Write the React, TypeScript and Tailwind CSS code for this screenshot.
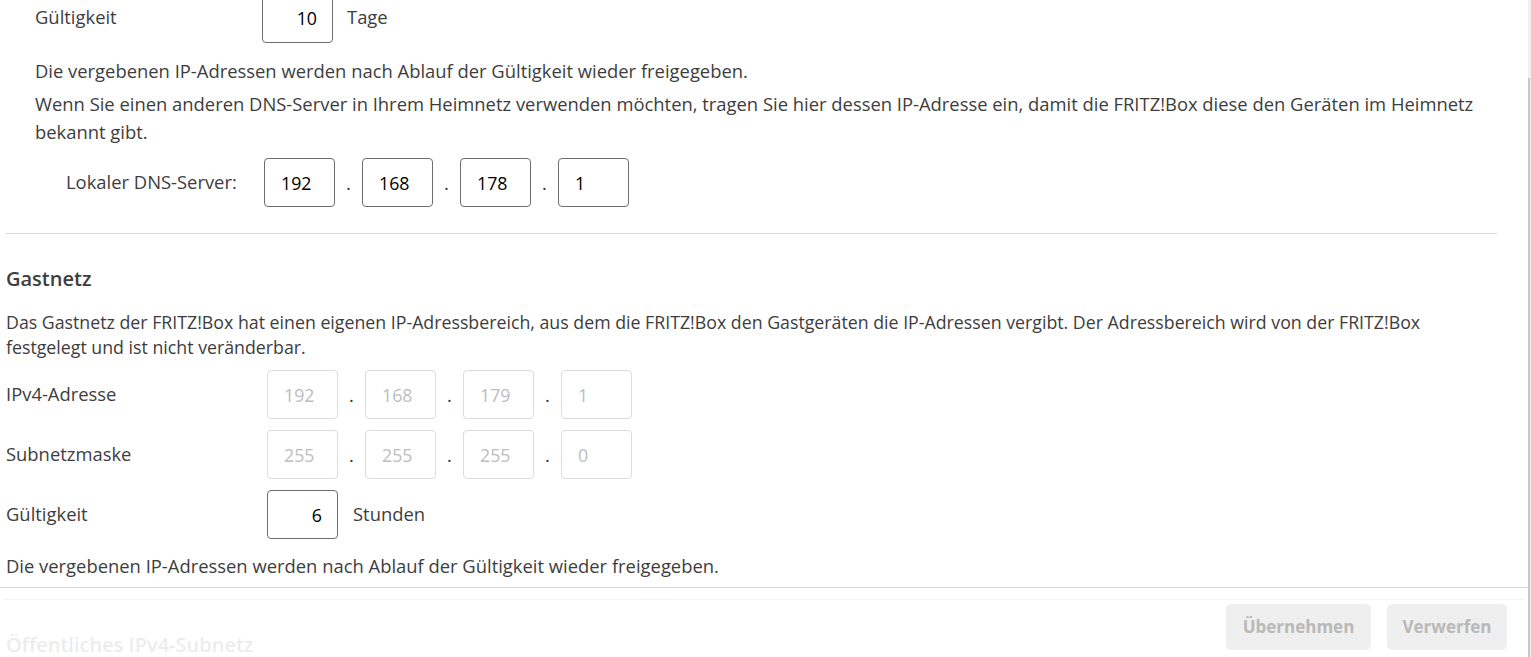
const inputBase =
  'h-[49px] w-[71px] rounded-[4px] border bg-white text-[17.75px] outline-none'

function IpRow({
  values,
  disabled,
}: {
  values: string[]
  disabled?: boolean
}) {
  return (
    <div className="flex items-center">
      {values.map((v, i) => (
        <div key={i} className="flex items-center">
          {i > 0 && <span className="w-[27px] text-center text-[#333]">.</span>}
          <input
            readOnly
            value={v}
            disabled={disabled}
            className={
              disabled
                ? inputBase + ' border-[#dcdcdc] pl-[16px] text-[#bdbdbd]'
                : inputBase + ' border-[#6e6e6e] pl-[16px] text-black'
            }
          />
        </div>
      ))}
    </div>
  )
}

export default function App() {
  return (
    <div className="relative h-[657px] w-[1531px] overflow-hidden bg-white font-['Open_Sans',sans-serif] text-[18.4px] leading-[28px] text-[#3d3d3d]">
      <div className="pl-[6px] pr-[34px]">
        {/* Heimnetz (upper part, scrolled) */}
        <div className="pl-[29px]">
          <div className="mt-[-6px] flex items-center">
            <span className="-mt-[3px] w-[227px]">Gültigkeit</span>
            <input
              readOnly
              value="10"
              className={inputBase + ' h-[48px] border-[#6e6e6e] pb-[2px] pr-[15px] text-right text-black'}
            />
            <span className="-mt-[3px] ml-[14px]">Tage</span>
          </div>
          <p className="mt-[14px]">
            Die vergebenen IP-Adressen werden nach Ablauf der Gültigkeit wieder freigegeben.
          </p>
          <p className="mt-[5px]">
            Wenn Sie einen anderen DNS-Server in Ihrem Heimnetz verwenden möchten, tragen Sie hier dessen IP-Adresse ein, damit die FRITZ!Box diese den Geräten im Heimnetz
            <br />
            bekannt gibt.
          </p>
          <div className="mt-[12px] flex items-center pl-[31px]">
            <span className="-mt-[2px] w-[198px]">Lokaler DNS-Server:</span>
            <IpRow values={['192', '168', '178', '1']} />
          </div>
        </div>

        <div className="mt-[26px] border-t border-[#d6d6d6]" />

        {/* Gastnetz */}
        <h2 className="mt-[31px] text-[20px] font-semibold leading-[28px]">Gastnetz</h2>
        <p className="mt-[17px] text-[17.75px] leading-[25px]">
          Das Gastnetz der FRITZ!Box hat einen eigenen IP-Adressbereich, aus dem die FRITZ!Box den Gastgeräten die IP-Adressen vergibt. Der Adressbereich wird von der FRITZ!Box
          <br />
          festgelegt und ist nicht veränderbar.
        </p>
        <div className="mt-[10px] flex flex-col gap-[11px]">
          <div className="flex items-center">
            <span className="-mt-[2px] w-[261px]">IPv4-Adresse</span>
            <IpRow values={['192', '168', '179', '1']} disabled />
          </div>
          <div className="flex items-center">
            <span className="-mt-[2px] w-[261px]">Subnetzmaske</span>
            <IpRow values={['255', '255', '255', '0']} disabled />
          </div>
          <div className="flex items-center">
            <span className="-mt-[2px] w-[261px]">Gültigkeit</span>
            <input
              readOnly
              value="6"
              className={inputBase + ' w-[70px] border-[#6e6e6e] pr-[15px] text-right text-black'}
            />
            <span className="-mt-[2px] ml-[15px]">Stunden</span>
          </div>
        </div>
        <p className="mt-[14px] leading-[25px]">
          Die vergebenen IP-Adressen werden nach Ablauf der Gültigkeit wieder freigegeben.
        </p>

        <h2 className="mt-[53px] text-[20px] font-semibold leading-[28px]">Öffentliches IPv4-Subnetz</h2>
      </div>

      {/* sticky footer overlay */}
      <div className="absolute bottom-0 left-0 right-[3px] h-[70px] border-t border-[#d9d9d9] bg-white/90">
        <div className="mx-[4px] mt-[11px] border-t border-[#f4f4f4]" />
        <div className="flex justify-end gap-[16px] pr-[21px] pt-[4px]">
          <button className="h-[46px] w-[145px] rounded-[5px] bg-[#efefef] text-[17px] font-bold text-[#b9b9b9]">
            Übernehmen
          </button>
          <button className="h-[46px] w-[120px] rounded-[5px] bg-[#efefef] text-[17px] font-bold text-[#b9b9b9]">
            Verwerfen
          </button>
        </div>
      </div>

      {/* scrollbar */}
      <div className="absolute right-0 top-0 flex h-full w-[3px] flex-col bg-[#f1f1f1]">
        <div className="mt-[78px] h-full w-[2px] bg-[#c9c9c9]" />
      </div>
    </div>
  )
}
